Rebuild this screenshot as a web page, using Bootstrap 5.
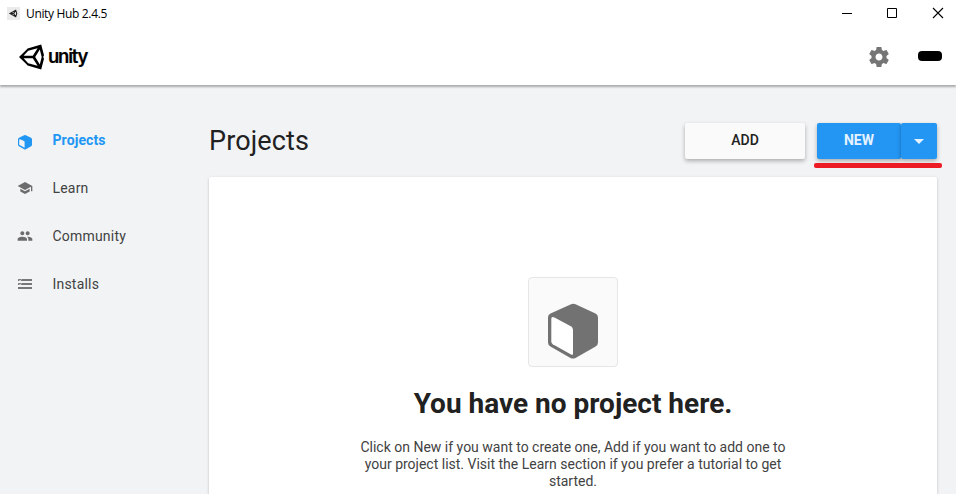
<!DOCTYPE html>
<html lang="en">
<head>
<meta charset="utf-8">
<meta name="viewport" content="width=device-width, initial-scale=1">
<title>Unity Hub 2.4.5</title>
<link href="https://cdn.jsdelivr.net/npm/bootstrap@5.3.0/dist/css/bootstrap.min.css" rel="stylesheet">
<style>
body { font-family: Roboto, "Liberation Sans", sans-serif; background: #f1f3f5; color: #212121; height: 494px; }
svg { display: block; flex: none; }
.titlebar { height: 28px; padding: 0 12px 0 7px; font: 12px/26px "Open Sans", "Noto Sans", sans-serif; color: #000; }
.title-text { margin-left: 6px; letter-spacing: -.34px; }
.app-icon { background: #ebebeb; margin-top: -2px; }
.win-controls { gap: 34px; margin-top: -2px; }
.topbar { height: 57px; padding: 0 14px 0 19px; box-shadow: 0 2px 2px rgba(0,0,0,.3); }
.wordmark { font: 600 18.5px/24px Inter, sans-serif; letter-spacing: -1.25px; color: #000; margin: -2px 0 0 3px; -webkit-text-stroke: .2px #000; }
.account { width: 24px; height: 10px; background: #000; border-radius: 4px; margin: -2px 0 0 27px; }
.sidebar { width: 209px; padding-top: 31px; flex: none; }
.side-link { height: 48px; padding: 0 0 0 17px; font-size: 14px; letter-spacing: .2px; color: #424242; }
.side-link span { margin-left: 19.5px; }
.side-link.active { color: #2196f3; font-weight: 700; letter-spacing: .1px; }
.workspace { padding: 38px 19px 0 0; min-width: 0; }
.page-title { font-size: 27px; font-weight: 400; line-height: 36px; letter-spacing: .12px; }
.hub-btn { height: 36px; border: 0; border-radius: 2px; padding: 0 0 2px; font-size: 14px; font-weight: 500; box-shadow: 0 2px 4px rgba(0,0,0,.3); }
.add-btn, .add-btn:hover { width: 120px; background: #fafafa; color: #212121; }
.new-group { margin-left: 12px; }
.new-btn, .new-btn:hover { width: 84px; background: #2396f4; color: #e6f3fe; font-weight: 700; }
.caret-btn, .caret-btn:hover { width: 36px; background: #2396f4; padding: 1px 0 0; }
.marker { position: absolute; left: -3px; top: 40px; width: 128px; height: 5px; border-radius: 2px; background: #ed1c24; }
.panel { margin-top: 18px; height: 320px; padding-top: 100px; background: #fff; border-radius: 2px; box-shadow: 0 1px 3px rgba(0,0,0,.22); }
.tile { width: 90px; height: 90px; background: #fafafa; border: 1px solid #e6e6e6; border-radius: 4px; padding: 18px 0 0; }
.empty-title { font-size: 28px; line-height: 36px; font-weight: 700; margin-top: 19px; }
.empty-text { width: 440px; font-size: 14px; line-height: 17px; color: #424242; margin-top: 17px; }
</style>
</head>
<body class="overflow-hidden d-flex flex-column">
<header>
  <div class="titlebar bg-white d-flex align-items-center position-relative z-1">
    <svg class="app-icon" width="13" height="13" viewBox="0 0 13 13"><g fill="none" stroke="#222" stroke-width="1.1"><path d="M3 6.5 8.7 3.2 9.8 6.5 8.7 9.8ZM3 6.5H6.7L8.7 3.2M6.7 6.5 8.7 9.8"/></g></svg>
    <span class="title-text">Unity Hub 2.4.5</span>
    <div class="win-controls d-flex align-items-center ms-auto">
      <svg width="12" height="12" viewBox="0 0 12 12"><path d="M2 6.5H12" stroke="#000"/></svg>
      <svg width="12" height="12" viewBox="0 0 12 12"><path d="M1.5 1.5H10.5V10.5H1.5Z" fill="none" stroke="#000"/></svg>
      <svg width="12" height="12" viewBox="0 0 12 12"><path d="M1 1 11 11M11 1 1 11" stroke="#000" stroke-width="1.1"/></svg>
    </div>
  </div>
  <div class="topbar bg-white d-flex align-items-center">
    <svg width="26" height="26" viewBox="0 0 26 26"><path fill="#000" fill-rule="evenodd" d="M0 13 7 6.3 8.6 4.4 22.2.6 25 11.3 24.2 13 25 14.7 22.2 25.4 8.6 21.6 7 19.7ZM4.6 11.7H13.8L18.6 4.2 9.2 6.7ZM4.6 14.3 9.2 19.3 18.6 21.8 13.8 14.3ZM16.2 13 20.8 20.6 22.7 13 20.8 5.4Z"/></svg>
    <span class="wordmark">unity</span>
    <svg class="ms-auto" width="24" height="24" viewBox="0 0 24 24" fill="#757575"><path d="M19.43 12.98c.04-.32.07-.64.07-.98s-.03-.66-.07-.98l2.11-1.65c.19-.15.24-.42.12-.64l-2-3.46c-.12-.22-.39-.3-.61-.22l-2.49 1c-.52-.4-1.08-.73-1.69-.98l-.38-2.65C14.46 2.18 14.25 2 14 2h-4c-.25 0-.46.18-.49.42l-.38 2.65c-.61.25-1.17.59-1.69.98l-2.49-1c-.23-.09-.49 0-.61.22l-2 3.46c-.13.22-.07.49.12.64l2.11 1.65c-.04.32-.07.65-.07.98s.03.66.07.98l-2.11 1.65c-.19.15-.24.42-.12.64l2 3.46c.12.22.39.3.61.22l2.49-1c.52.4 1.08.73 1.69.98l.38 2.65c.03.24.24.42.49.42h4c.25 0 .46-.18.49-.42l.38-2.65c.61-.25 1.17-.59 1.69-.98l2.49 1c.23.09.49 0 .61-.22l2-3.46c.12-.22.07-.49-.12-.64l-2.11-1.65zM12 15.5c-1.93 0-3.5-1.57-3.5-3.5s1.57-3.5 3.5-3.5 3.5 1.57 3.5 3.5-1.57 3.5-3.5 3.5z"/></svg>
    <div class="account"></div>
  </div>
</header>
<div class="d-flex flex-grow-1">
  <nav class="sidebar nav flex-column flex-nowrap">
    <a class="side-link active d-flex align-items-center text-decoration-none" href="#"><svg class="mt-1" width="16" height="16" viewBox="0 0 16 16"><path fill="#2196f3" fill-rule="evenodd" d="M7.2 1.2Q8 .8 8.8 1.2L14 3.7Q15 4.2 15 5.2V10.8Q15 11.7 14.2 12.2L8.8 15.3Q8 15.7 7.2 15.3L1.9 12.2Q1 11.7 1 10.8V5.2Q1 4.2 2 3.7ZM2.2 6V10.8L7.6 13.8V7.9Q7.6 7.3 7 7L3 5.2Q2.2 5 2.2 6Z"/></svg><span>Projects</span></a>
    <a class="side-link d-flex align-items-center text-decoration-none" href="#"><svg width="16" height="16" viewBox="0 0 24 24" fill="#6c6c6c"><path d="M5 13.18v4L12 21l7-3.82v-4L12 17l-7-3.82zM12 3 1 9l11 6 9-4.91V17h2V9L12 3z"/></svg><span>Learn</span></a>
    <a class="side-link d-flex align-items-center text-decoration-none" href="#"><svg width="16" height="16" viewBox="0 0 24 24" fill="#6c6c6c"><path d="M16 11c1.66 0 2.99-1.34 2.99-3S17.66 5 16 5s-3 1.34-3 3 1.34 3 3 3zm-8 0c1.66 0 2.99-1.34 2.99-3S9.66 5 8 5 5 6.34 5 8s1.34 3 3 3zm0 2c-2.33 0-7 1.17-7 3.5V19h14v-2.5c0-2.33-4.67-3.5-7-3.5zm8 0c-.29 0-.62.02-.97.05 1.16.84 1.97 1.97 1.97 3.45V19h6v-2.5c0-2.33-4.67-3.5-7-3.5z"/></svg><span>Community</span></a>
    <a class="side-link d-flex align-items-center text-decoration-none" href="#"><svg width="16" height="16" viewBox="0 0 16 16" fill="none"><path stroke="#777" stroke-width="2" d="M1 4H15M1 8H15M1 12H15"/><path stroke="#f1f3f5" stroke-width=".8" d="M2 3.8 3 4.8 4.5 3.6M2 7.8 3 8.8 4.5 7.6"/></svg><span>Installs</span></a>
  </nav>
  <main class="workspace flex-grow-1">
    <div class="d-flex align-items-center">
      <h1 class="page-title mb-0">Projects</h1>
      <button class="btn hub-btn add-btn ms-auto">ADD</button>
      <div class="d-flex position-relative new-group">
        <button class="btn hub-btn new-btn">NEW</button>
        <button class="btn hub-btn caret-btn d-flex align-items-center justify-content-center" aria-label="More options"><svg width="10" height="5" viewBox="0 0 10 5"><path d="M0 0H10L5 5Z" fill="#e6f3fe"/></svg></button>
        <div class="marker"></div>
      </div>
    </div>
    <section class="panel d-flex flex-column align-items-center text-center">
      <div class="tile d-flex justify-content-center"><svg width="64" height="64" viewBox="0 0 64 64"><path fill="#727272" d="M29.5 8.6Q32 7 34.5 8.2L54.5 17.6Q57 18.8 57 21.5V46.5Q57 49 54.6 50.5L34.5 61.9Q32 63.3 29.5 61.9L9.4 50.5Q7 49 7 46.5V21.5Q7 18.8 9.5 17.6Z"/><path fill="#fff" d="M10.3 23V45.5Q10.3 47.3 11.8 48.2L30.5 58.7Q32 59.3 32 57.7V34Q32 31.5 29.8 30.2L13.5 21.6Q10.3 20 10.3 23Z"/></svg></div>
      <h2 class="empty-title mb-0">You have no project here.</h2>
      <p class="empty-text mb-0">Click on New if you want to create one, Add if you want to add one to your project list. Visit the Learn section if you prefer a tutorial to get started.</p>
    </section>
  </main>
</div>
<script src="https://cdn.jsdelivr.net/npm/bootstrap@5.3.0/dist/js/bootstrap.bundle.min.js"></script>
</body>
</html>
